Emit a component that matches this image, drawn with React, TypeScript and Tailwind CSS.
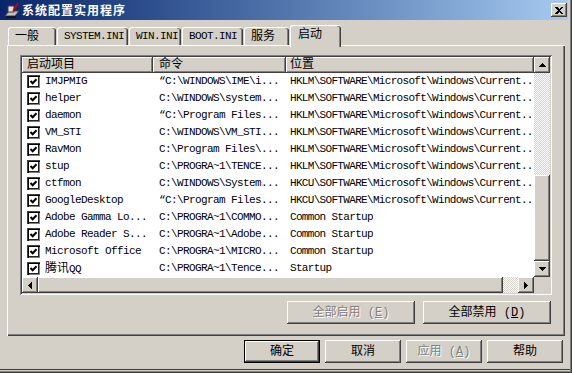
import React from "react";

const raised =
  "shadow-[inset_-1px_-1px_#404040,inset_1px_1px_#ffffff,inset_-2px_-2px_#808080,inset_2px_2px_#d4d0c8]";
const sunken =
  "shadow-[inset_1px_1px_#808080,inset_-1px_-1px_#ffffff,inset_2px_2px_#404040,inset_-2px_-2px_#d4d0c8]";
const checker =
  "bg-[image:repeating-conic-gradient(#ffffff_0%_25%,#d4d0c8_0%_50%)] bg-[length:2px_2px]";

const ROWS: [string, string, string][] = [
  ["IMJPMIG", "“C:\\WINDOWS\\IME\\i...", "HKLM\\SOFTWARE\\Microsoft\\Windows\\Current.."],
  ["helper", "C:\\WINDOWS\\system...", "HKLM\\SOFTWARE\\Microsoft\\Windows\\Current.."],
  ["daemon", "“C:\\Program Files...", "HKLM\\SOFTWARE\\Microsoft\\Windows\\Current.."],
  ["VM_STI", "C:\\WINDOWS\\VM_STI...", "HKLM\\SOFTWARE\\Microsoft\\Windows\\Current.."],
  ["RavMon", "C:\\Program Files\\...", "HKLM\\SOFTWARE\\Microsoft\\Windows\\Current.."],
  ["stup", "C:\\PROGRA~1\\TENCE...", "HKLM\\SOFTWARE\\Microsoft\\Windows\\Current.."],
  ["ctfmon", "C:\\WINDOWS\\System...", "HKCU\\SOFTWARE\\Microsoft\\Windows\\Current.."],
  ["GoogleDesktop", "“C:\\Program Files...", "HKCU\\SOFTWARE\\Microsoft\\Windows\\Current.."],
  ["Adobe Gamma Lo...", "C:\\PROGRA~1\\COMMO...", "Common Startup"],
  ["Adobe Reader S...", "C:\\PROGRA~1\\Adobe...", "Common Startup"],
  ["Microsoft Office", "C:\\PROGRA~1\\MICRO...", "Common Startup"],
  ["腾讯QQ", "C:\\PROGRA~1\\Tence...", "Startup"],
];

const TABS = [
  { label: "一般", w: "w-[48px]", cn: true },
  { label: "SYSTEM.INI", w: "w-[71px]" },
  { label: "WIN.INI", w: "w-[52px]" },
  { label: "BOOT.INI", w: "w-[61px]" },
  { label: "服务", w: "w-[45px]", cn: true },
];

function Arrow({ dir }: { dir: "up" | "down" | "left" | "right" }) {
  const vertical = dir === "up" || dir === "down";
  const pts = {
    up: "3.5,0 7,4 0,4",
    down: "0,0 7,0 3.5,4",
    left: "4,0 4,7 0,3.5",
    right: "0,0 4,3.5 0,7",
  }[dir];
  return (
    <svg
      width={vertical ? 7 : 4}
      height={vertical ? 4 : 7}
      viewBox={vertical ? "0 0 7 4" : "0 0 4 7"}
      shapeRendering="crispEdges"
    >
      <polygon points={pts} fill="#000" />
    </svg>
  );
}

function ScrollBtn({ dir }: { dir: "up" | "down" | "left" | "right" }) {
  return (
    <div className={`w-[16px] h-[16px] shrink-0 bg-[#d4d0c8] flex items-center justify-center ${raised}`}>
      <Arrow dir={dir} />
    </div>
  );
}

function Check() {
  return (
    <div className="w-[13px] h-[13px] shrink-0 bg-white flex items-center justify-center shadow-[inset_1px_1px_#404040,inset_2px_2px_#000000,inset_-1px_-1px_#808080,inset_-2px_-2px_#202020]">
      <svg width="7" height="7" viewBox="0 0 7 7">
        <polyline points="0.5,3 2.7,5.3 6.5,1.2" fill="none" stroke="#000" strokeWidth="2" />
      </svg>
    </div>
  );
}

function Btn({
  children,
  w,
  disabled,
  def,
}: {
  children: React.ReactNode;
  w: string;
  disabled?: boolean;
  def?: boolean;
}) {
  return (
    <div
      className={`${w} h-[23px] bg-[#d4d0c8] flex items-center justify-center ${
        def ? "border border-black" : ""
      } ${raised} ${disabled ? "text-[#808080] [text-shadow:1px_1px_#ffffff]" : "text-black"}`}
    >
      {children}
    </div>
  );
}

export default function App() {
  return (
    <div className="w-[572px] h-[373px] bg-[#d4d0c8] flex flex-col overflow-hidden shadow-[inset_-1px_-1px_#404040,inset_-2px_-2px_#808080,inset_0_-3px_#d4d0c8,inset_0_-4px_#404040] font-[family-name:'Liberation_Mono','Noto_Sans_CJK_SC',monospace] text-[11px] tracking-[-0.6px] text-black">
      {/* title bar */}
      <div className="h-[20px] mr-[4px] flex items-center pl-[4px] pr-[1px] bg-linear-to-r from-[#0a246a] to-[#a6caf0]">
        <svg width="16" height="16" viewBox="0 0 16 16" className="shrink-0">
          <polygon points="1,14 5,9 15,9 11,14" fill="#c0c0c0" stroke="#404040" strokeWidth="1" />
          <rect x="4" y="4" width="6" height="6" fill="#e0e0e0" stroke="#404040" strokeWidth="1" />
          <line x1="9" y1="9" x2="14" y2="1" stroke="#d00000" strokeWidth="1.6" />
          <line x1="2" y1="15" x2="12" y2="15" stroke="#000" strokeWidth="1" />
        </svg>
        <span className="ml-[2px] text-white font-bold text-[12px] tracking-[1px] font-[family-name:'Noto_Sans_CJK_SC',sans-serif]">
          系统配置实用程序
        </span>
        <div className={`ml-auto w-[16px] h-[14px] bg-[#d4d0c8] flex items-center justify-center ${raised}`}>
          <svg width="8" height="7" viewBox="0 0 8 7" shapeRendering="crispEdges">
            <path d="M0 0h2l2 2 2-2h2L5 3.5 8 7H6L4 5 2 7H0l3-3.5z" fill="#000" />
          </svg>
        </div>
      </div>

      {/* tabs */}
      <div className="mt-[5px] h-[20px] pl-[8px] flex items-end gap-[1px]">
        {TABS.map((t) => (
          <div
            key={t.label}
            className={`${t.w} h-[18px] pl-[6px] flex items-center rounded-t-[3px] border-t border-l border-white shadow-[inset_-1px_0_#404040,inset_-2px_0_#808080] ${
              t.cn ? "text-[12px] tracking-normal" : ""
            }`}
          >
            {t.label}
          </div>
        ))}
        <div className="relative z-10 -mb-[2px] w-[51px] h-[22px] pl-[7px] pb-[4px] flex items-center bg-[#d4d0c8] rounded-t-[3px] border-t border-l border-white shadow-[inset_-1px_0_#404040,inset_-2px_0_#808080] text-[12px] tracking-normal">
          启动
        </div>
      </div>

      {/* tab panel */}
      <div className="ml-[7px] w-[558px] h-[291px] border-t border-l border-white shadow-[inset_-1px_-1px_#404040,inset_-2px_-2px_#808080] flex flex-col">
        <div className={`mt-[9px] ml-[12px] w-[532px] h-[240px] p-[2px] bg-white ${sunken}`}>
          <div className="grid grid-cols-[512px_16px] grid-rows-[220px_16px] h-full">
            {/* list body */}
            <div className="overflow-hidden flex flex-col">
              <div className="flex h-[16px] shrink-0 text-[12px] tracking-normal">
                <div className={`w-[131px] pl-[5px] flex items-center bg-[#d4d0c8] ${raised}`}>启动项目</div>
                <div className={`w-[133px] pl-[6px] flex items-center bg-[#d4d0c8] ${raised}`}>命令</div>
                <div className={`w-[248px] pl-[4px] flex items-center bg-[#d4d0c8] ${raised}`}>位置</div>
              </div>
              {ROWS.map(([name, cmd, loc]) => (
                <div key={name} className="flex h-[17px] shrink-0 items-center whitespace-nowrap">
                  <div className="w-[131px] pl-[5px] flex items-center gap-[5px] overflow-hidden">
                    <Check />
                    {name === "腾讯QQ" ? (
                      <span>
                        <span className="text-[12px] tracking-normal">腾讯</span>QQ
                      </span>
                    ) : (
                      <span>{name}</span>
                    )}
                  </div>
                  <div className="w-[133px] pl-[6px] overflow-hidden">{cmd}</div>
                  <div className="w-[248px] pl-[4px] overflow-hidden tracking-[-0.68px]">{loc}</div>
                </div>
              ))}
            </div>

            {/* vertical scrollbar */}
            <div className="flex flex-col">
              <ScrollBtn dir="up" />
              <div className={`h-[102px] ${checker}`} />
              <div className={`h-[86px] bg-[#d4d0c8] ${raised}`} />
              <ScrollBtn dir="down" />
            </div>

            {/* horizontal scrollbar */}
            <div className="flex">
              <ScrollBtn dir="left" />
              <div className={`w-[465px] h-[16px] bg-[#d4d0c8] ${raised}`} />
              <div className={`w-[15px] h-[16px] ${checker}`} />
              <ScrollBtn dir="right" />
            </div>
            <div className="bg-[#d4d0c8]" />
          </div>
        </div>

        <div className="mt-[6px] ml-[279px] flex gap-[8px] text-[12px] tracking-normal">
          <Btn w="w-[128px]" disabled>
            全部启用 (<span className="underline">E</span>)
          </Btn>
          <Btn w="w-[128px]">
            全部禁用 (<span className="underline">D</span>)
          </Btn>
        </div>
      </div>

      {/* dialog buttons */}
      <div className="mt-[4px] pr-[9px] flex justify-end gap-[5px] text-[12px] tracking-normal">
        <Btn w="w-[76px]" def>
          确定
        </Btn>
        <Btn w="w-[76px]">取消</Btn>
        <Btn w="w-[76px]" disabled>
          应用 (<span className="underline">A</span>)
        </Btn>
        <Btn w="w-[76px]">帮助</Btn>
      </div>
    </div>
  );
}
